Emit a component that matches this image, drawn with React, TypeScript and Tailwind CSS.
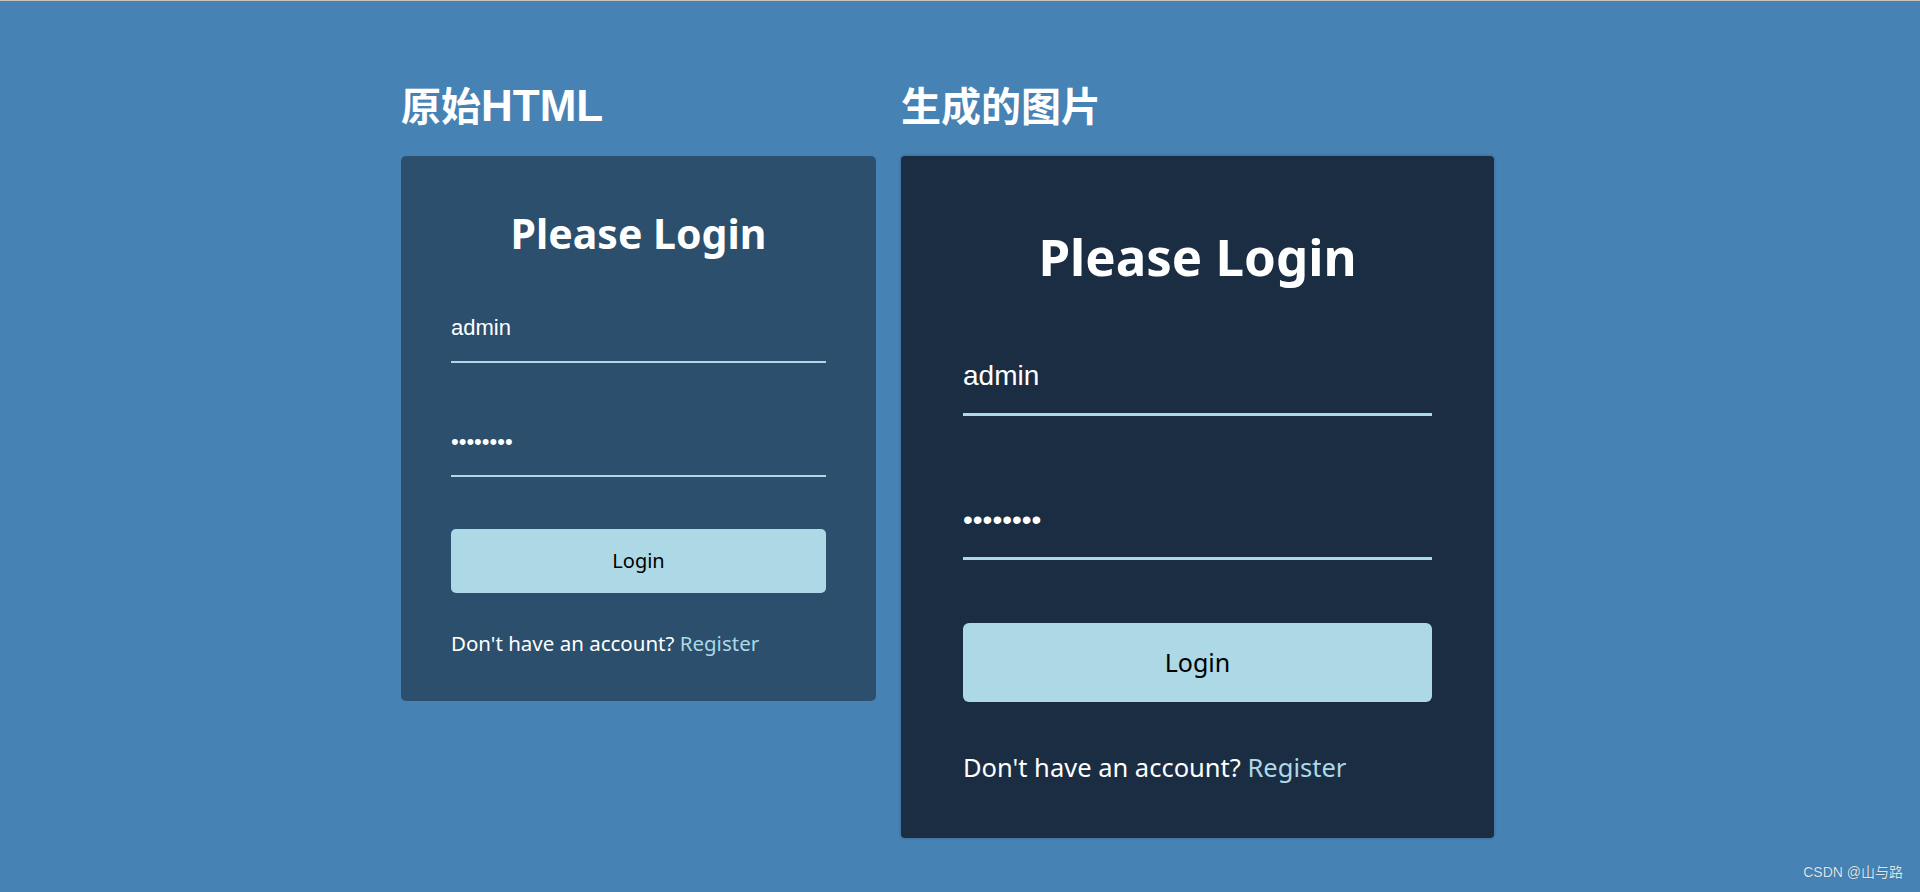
import React from 'react';

type CardStyle = {
  card: string;
  title: string;
  field: string;
  fieldGap: string;
  pwGap: string;
  button: string;
  footer: string;
};

const small: CardStyle = {
  card: 'w-[475px] h-[545px] bg-[#2b4f6d] rounded-[5px] px-[50px] pt-[57px]',
  title: 'text-[41px]',
  field: 'text-[22px] pb-[22px] border-b-2',
  fieldGap: 'mt-[63px]',
  pwGap: 'mt-[68px]',
  button: 'mt-[52px] h-[64px] rounded-[5px] text-[20px]',
  footer: 'mt-[40px] text-[20.5px]',
};

const big: CardStyle = {
  card: 'w-[593px] h-[682px] bg-[#1b2d43] rounded-[4px] px-[62px] pt-[75px] shadow-[0_0_3px_rgba(0,0,0,0.25)]',
  title: 'text-[51px]',
  field: 'text-[28px] pb-[23px] border-b-[3px]',
  fieldGap: 'mt-[80px]',
  pwGap: 'mt-[90px]',
  button: 'mt-[63px] h-[79px] rounded-[6px] text-[25px]',
  footer: 'mt-[53px] text-[25.5px]',
};

const LoginCard: React.FC<{ s: CardStyle }> = ({ s }) => (
  <div className={`${s.card} flex flex-col font-['Noto_Sans',sans-serif] text-white`}>
    <h2 className={`${s.title} font-bold leading-none text-center`}>Please Login</h2>
    <div className={`${s.fieldGap} ${s.field} border-[#add8e6] leading-none font-['Liberation_Sans',Arial,sans-serif]`}>
      admin
    </div>
    <div className={`${s.pwGap} ${s.field} border-[#add8e6] leading-none font-['Liberation_Sans',Arial,sans-serif]`}>
      ••••••••
    </div>
    <button className={`${s.button} w-full bg-[#add8e6] text-black flex items-center justify-center`}>
      Login
    </button>
    <p className={`${s.footer} leading-none whitespace-nowrap`}>
      Don't have an account? <a className="text-[#add8e6]">Register</a>
    </p>
  </div>
);

export default function App() {
  return (
    <div className="relative h-[892px] bg-[#4682b4] border-t border-[#c4c4c4] overflow-hidden">
      <div className="flex items-start gap-[25px] pl-[401px] pt-[86px]">
        <div>
          <h1 className="text-[40px] leading-none font-bold text-white mb-[29px] font-['Liberation_Sans','Noto_Sans_CJK_SC',sans-serif]">
            原始<span className="text-[44px] leading-[0]">HTML</span>
          </h1>
          <LoginCard s={small} />
        </div>
        <div>
          <h1 className="text-[40px] leading-none font-bold text-white mb-[29px] font-['Liberation_Sans','Noto_Sans_CJK_SC',sans-serif]">
            生成的图片
          </h1>
          <LoginCard s={big} />
        </div>
      </div>
      <div className="absolute right-[17px] bottom-[9px] text-[14px] text-[#dde6ef] font-['Liberation_Sans','Noto_Sans_CJK_SC',sans-serif] [text-shadow:0_0_1px_rgba(0,0,0,0.4)]">
        CSDN @山与路
      </div>
    </div>
  );
}
